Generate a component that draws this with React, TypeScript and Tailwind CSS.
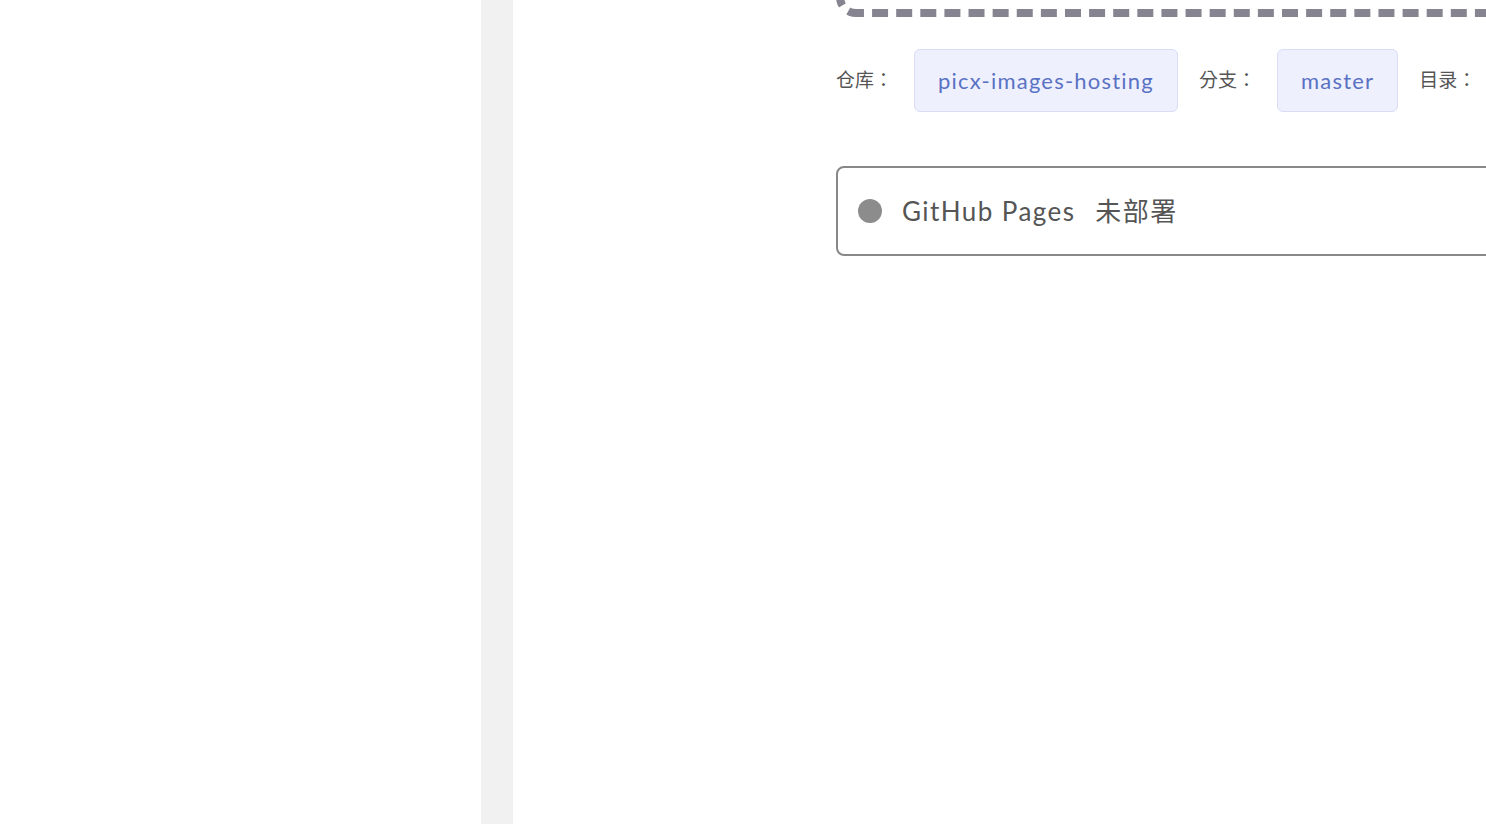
export default function App() {
  return (
    <div
      className="flex h-[824px] w-[1486px] overflow-hidden bg-white"
      style={{ fontFamily: 'Lato, "Noto Sans CJK TC", sans-serif' }}
    >
      {/* sidebar */}
      <aside className="w-[481px] shrink-0 bg-white" />
      <div className="w-[32px] shrink-0 bg-[#f1f1f1]" />

      {/* main */}
      <main className="flex-1 pl-[323px]">
        <div className="w-[1000px]">
          {/* upload drop zone (scrolled out of view) */}
          <div className="-mt-[183px] h-[200px] rounded-[20px] border-[8px] border-dashed border-[#858490]" />

          {/* repo info */}
          <div className="mt-[32px] flex items-center gap-[21px] text-[19px] text-[#555]">
            <span>仓库：</span>
            <span className="flex h-[63px] items-center rounded-md border border-[#d9ddf6] bg-[#eef0fd] px-[23px] text-[22px] tracking-[0.055em] text-[#5a72c4]">
              picx-images-hosting
            </span>
            <span>分支：</span>
            <span className="flex h-[63px] items-center rounded-md border border-[#d9ddf6] bg-[#eef0fd] px-[23px] text-[22px] tracking-[0.055em] text-[#5a72c4]">
              master
            </span>
            <span>目录：</span>
          </div>

          {/* deploy status */}
          <div className="mt-[54px] flex h-[90px] items-center rounded-lg border-2 border-[#888] pl-[20px] text-[26px] tracking-[0.055em] text-[#555]">
            <span className="h-6 w-6 rounded-full bg-[#8c8c8c]" />
            <span className="ml-[20px]">GitHub Pages</span>
            <span className="ml-[20px]">未部署</span>
          </div>
        </div>
      </main>
    </div>
  )
}
